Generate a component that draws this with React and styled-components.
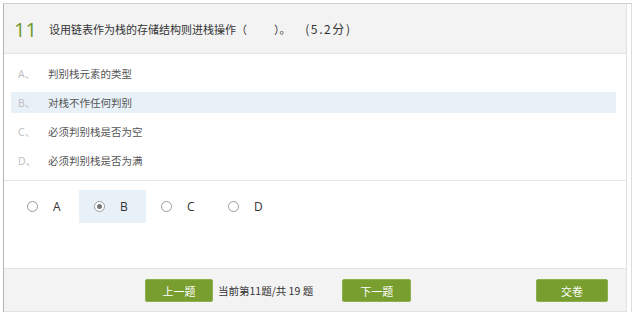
import React from "react";
import styled, { createGlobalStyle } from "styled-components";

const Global = createGlobalStyle`
  html, body { margin: 0; padding: 0; background: #fff; }
  body { font-family: "Noto Sans CJK SC", "Noto Sans", sans-serif; }
`;

const Frame = styled.div`
  margin: 3px 0 0 3px;
  width: 629px;
  height: 309px;
  box-sizing: border-box;
  border-top: 1px solid #cfcfcf;
  border-left: 1px solid #b5b5b5;
  border-right: 1px solid #dcdcdc;
  display: flex;
`;

const Panel = styled.div`
  width: 622px;
  border-right: 1px solid #e2e2e2;
  display: flex;
  flex-direction: column;
`;

const Header = styled.div`
  height: 49px;
  background: #f3f3f3;
  border-bottom: 1px solid #e3e3e3;
  display: flex;
  align-items: center;
  padding-left: 10px;
`;

const Num = styled.span`
  font-family: "Open Sans", "Noto Sans", sans-serif;
  font-size: 20px;
  color: #6f9a2b;
  width: 35px;
  margin-top: 1px;
`;

const Question = styled.span`
  font-size: 11px;
  color: #333;
  white-space: pre;
`;

const Score = styled.span`
  font-size: 12px;
  letter-spacing: 1.6px;
`;

const Options = styled.div`
  padding: 9px 10px 9px 7px;
  display: flex;
  flex-direction: column;
  gap: 8px;
  border-bottom: 1px solid #e6e6e6;
`;

const OptionRow = styled.div`
  height: 21px;
  display: flex;
  align-items: center;
  background: ${(p) => (p.$active ? "#e8f1f8" : "transparent")};
  font-size: 10.5px;
`;

const OptLetter = styled.span`
  width: 37px;
  padding-left: 7px;
  box-sizing: border-box;
  color: #bdbdbd;
  font-family: "Open Sans", "Noto Sans CJK SC", sans-serif;
`;

const OptText = styled.span`
  color: #555;
`;

const Choices = styled.div`
  display: flex;
  padding: 9px 0 0 8px;
  flex: 1;
`;

const Choice = styled.div`
  width: 67px;
  height: 33px;
  display: flex;
  align-items: center;
  background: ${(p) => (p.$active ? "#e8f1f8" : "transparent")};
  padding-left: 15px;
  box-sizing: border-box;
  gap: 15px;
  font-family: "Open Sans", "Noto Sans", sans-serif;
  font-size: 12px;
  color: #333;
`;

const Radio = styled.span`
  width: 11px;
  height: 11px;
  border-radius: 50%;
  border: 1px solid #9a9a9a;
  background: #fff;
  box-sizing: border-box;
  display: inline-flex;
  align-items: center;
  justify-content: center;
  &::after {
    content: "";
    width: 5px;
    height: 5px;
    border-radius: 50%;
    background: ${(p) => (p.$checked ? "#777" : "transparent")};
  }
`;

const Footer = styled.div`
  height: 44px;
  background: #f3f3f3;
  border-top: 1px solid #e6e6e6;
  border-bottom: 1px solid #e2e2e2;
  display: flex;
  align-items: center;
  padding-left: 141px;
  box-sizing: border-box;
`;

const Button = styled.button`
  width: ${(p) => p.$w || 68}px;
  height: 23px;
  background: #789e2f;
  border: 1px solid #8fb04e;
  border-radius: 2px;
  color: #fff;
  font-family: "Noto Sans CJK SC", sans-serif;
  font-size: 11px;
  padding: 0;
  margin: 1px ${(p) => p.$mr || 0}px 0 0;
`;

const Status = styled.span`
  font-size: 10.5px;
  color: #333;
  margin: 0 29px 0 5px;
`;

const Spacer = styled.div`
  flex: 1;
`;

const options = [
  ["A", "判别栈元素的类型"],
  ["B", "对栈不作任何判别"],
  ["C", "必须判别栈是否为空"],
  ["D", "必须判别栈是否为满"],
];

export default function App() {
  return (
    <>
      <Global />
      <Frame>
        <Panel>
          <Header>
            <Num>11</Num>
            <Question>
              设用链表作为栈的存储结构则进栈操作（　　  ）。      <Score>(5.2分)</Score>
            </Question>
          </Header>
          <Options>
            {options.map(([l, t]) => (
              <OptionRow key={l} $active={l === "B"}>
                <OptLetter>{l}、</OptLetter>
                <OptText>{t}</OptText>
              </OptionRow>
            ))}
          </Options>
          <Choices>
            {options.map(([l]) => (
              <Choice key={l} $active={l === "B"}>
                <Radio $checked={l === "B"} />
                {l}
              </Choice>
            ))}
          </Choices>
          <Footer>
            <Button>上一题</Button>
            <Status>当前第11题/共 19 题</Status>
            <Button $w={69}>下一题</Button>
            <Spacer />
            <Button $w={72} $mr={18}>交卷</Button>
          </Footer>
        </Panel>
      </Frame>
    </>
  );
}
